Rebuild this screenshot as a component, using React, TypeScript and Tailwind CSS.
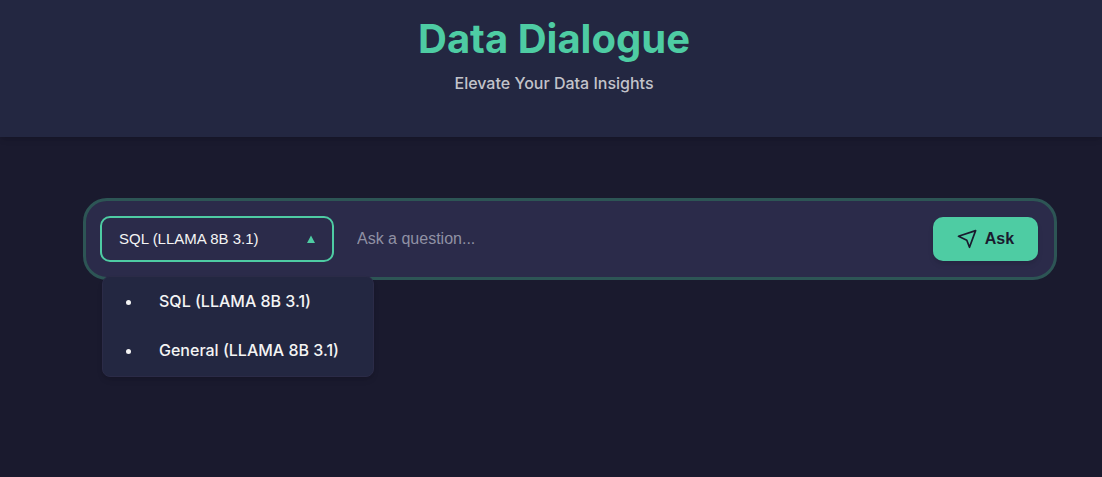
import { useState } from "react";

const MODELS = ["SQL (LLAMA 8B 3.1)", "General (LLAMA 8B 3.1)"];

function SendIcon() {
  return (
    <svg
      aria-hidden="true"
      className="size-5"
      viewBox="0 0 20 20"
      fill="none"
      stroke="currentColor"
      strokeWidth="1.7"
      strokeLinejoin="round"
    >
      <path d="M1.5 7.3 18.6 1.6 12.5 18.3 9.8 11.2Z" />
    </svg>
  );
}

function ModelPicker() {
  const [open, setOpen] = useState(true);
  const [model, setModel] = useState(MODELS[0]);

  return (
    <div className="relative w-[234px] shrink-0">
      <button
        type="button"
        aria-haspopup="true"
        aria-expanded={open}
        onClick={() => setOpen(!open)}
        className="flex h-[46px] w-full items-center justify-between rounded-[10px] border-2 border-[#4ecca3] px-[17px] font-['Liberation_Sans',sans-serif] text-[15px] text-[#f4f4f4]"
      >
        <span>{model}</span>
        <svg aria-hidden="true" className="h-2 w-2 text-[#4ecca3]" viewBox="0 0 8 8">
          <path d="M4 0.5 8 8H0Z" fill="currentColor" />
        </svg>
      </button>
      {open && (
        <ul className="absolute top-[60px] left-0.5 z-10 w-[272px] list-disc rounded-lg border border-[#2b2b47] bg-[#232741] pb-px pl-10 text-[#f4f4f4] shadow-md">
          {MODELS.map((name) => (
            <li key={name} className="h-[49px]">
              <button
                type="button"
                onClick={() => {
                  setModel(name);
                  setOpen(false);
                }}
                className="h-12 w-full px-4 text-left font-medium"
              >
                {name}
              </button>
            </li>
          ))}
        </ul>
      )}
    </div>
  );
}

export default function App() {
  return (
    <div className="min-h-screen bg-[#1a1a2e] font-[Inter,sans-serif] text-base">
      <header className="flex flex-col items-center gap-2 bg-[#232741] pt-[15px] pb-[42px] pl-1.5 shadow-md">
        <h1 className="text-[40px] leading-[48px] font-bold text-[#4ecca3]">Data Dialogue</h1>
        <p className="leading-6 font-medium text-[#c2c3ca]">Elevate Your Data Insights</p>
      </header>
      <main className="pt-[61px] pr-[45px] pl-[83px]">
        <form
          onSubmit={(event) => event.preventDefault()}
          className="flex items-center gap-2 rounded-3xl border-3 border-[#2d5555] bg-[#2b2b4a] py-[15px] pr-4 pl-3.5"
        >
          <ModelPicker />
          <input
            type="text"
            aria-label="Question"
            placeholder="Ask a question..."
            className="h-11 min-w-0 flex-1 px-[15px] font-['Liberation_Sans',sans-serif] text-[#f4f4f4] outline-none placeholder:text-[#9091a4]"
          />
          <button
            type="submit"
            className="flex h-11 w-[105px] items-center justify-center gap-2 rounded-[10px] bg-[#4ecca3] font-['Liberation_Sans',sans-serif] font-bold text-[#1a1a2e] shadow-md"
          >
            <SendIcon />
            Ask
          </button>
        </form>
      </main>
    </div>
  );
}
